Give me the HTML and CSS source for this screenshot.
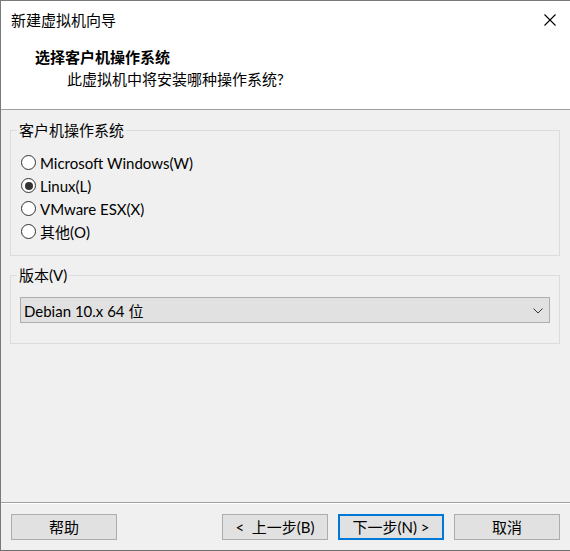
FILE: index.html
```html
<!DOCTYPE html>
<html lang="zh-CN">
<head>
<meta charset="utf-8">
<title>新建虚拟机向导</title>
<link rel="stylesheet" href="styles.css">
</head>
<body>
<div class="window">
  <div class="titlebar">
    <span class="title">新建虚拟机向导</span>
    <span class="close" aria-label="关闭">
      <svg width="12" height="12" viewBox="0 0 12 12"><path d="M0.5 0.5 L11.5 11.5 M11.5 0.5 L0.5 11.5" stroke="#000" stroke-width="1.1" fill="none"/></svg>
    </span>
  </div>
  <div class="header">
    <div class="h-title">选择客户机操作系统</div>
    <div class="h-sub">此虚拟机中将安装哪种操作系统?</div>
  </div>
  <div class="content">
    <fieldset class="group group-os">
      <legend>客户机操作系统</legend>
      <label class="radio"><input type="radio" name="os"><span>Microsoft Windows(W)</span></label>
      <label class="radio"><input type="radio" name="os" checked><span>Linux(L)</span></label>
      <label class="radio"><input type="radio" name="os"><span>VMware ESX(X)</span></label>
      <label class="radio"><input type="radio" name="os"><span>其他(O)</span></label>
    </fieldset>
    <fieldset class="group group-ver">
      <legend>版本(V)</legend>
      <div class="combo">
        <span class="combo-text">Debian 10.x 64 位</span>
        <svg class="chev" width="10" height="6" viewBox="0 0 10 6"><path d="M0.5 0.5 L5 5 L9.5 0.5" stroke="#333" stroke-width="1" fill="none"/></svg>
      </div>
    </fieldset>
  </div>
  <div class="footer">
    <button class="btn">帮助</button>
    <div class="spacer"></div>
    <button class="btn">&lt;&nbsp; 上一步(B)</button>
    <button class="btn btn-default">下一步(N) &gt;</button>
    <button class="btn">取消</button>
  </div>
</div>
</body>
</html>
```
FILE: styles.css
```css
html, body {
  margin: 0;
  padding: 0;
  background: #f0f0f0;
}
body {
  font-family: Lato, "Noto Sans CJK SC", sans-serif;
  font-size: 15px;
  color: #000;
}
.window {
  width: 569px;
  height: 549px;
  border-left: 1px solid #7a7a7a;
  border-top: 1px solid #7a7a7a;
  border-bottom: 1px solid #6e6e6e;
  display: flex;
  flex-direction: column;
  background: #f0f0f0;
  overflow: hidden;
}
.titlebar {
  height: 37px;
  background: #fff;
  display: flex;
  align-items: center;
  padding-left: 10px;
  padding-right: 14px;
  justify-content: space-between;
  flex: none;
}
.title {
  line-height: 20px;
}
.close {
  display: flex;
  width: 12px;
  height: 12px;
}
.header {
  background: #fff;
  height: 72px;
  border-bottom: 1px solid #a0a0a0;
  padding-top: 8px;
  box-sizing: border-box;
  flex: none;
}
.h-title {
  font-weight: bold;
  line-height: 22px;
  padding-left: 34px;
}
.h-sub {
  line-height: 22px;
  padding-left: 66px;
}
.content {
  flex: 1;
  padding: 10px 0 0 9px;
}
.group {
  width: 550px;
  box-sizing: border-box;
  margin: 0;
  border: 1px solid #dcdcdc;
  min-width: 0;
}
.group legend {
  padding: 0 2px;
  line-height: 20px;
}
.group-os {
  padding: 11px 10px 12px 10px;
}
.group-os legend {
  margin-left: -4px;
}
.group-ver {
  margin-top: 9px;
  padding: 12px 9px 20px 9px;
}
.group-ver legend {
  margin-left: -3px;
}
.radio {
  display: flex;
  align-items: center;
  height: 23px;
  gap: 4px;
}
.radio input {
  appearance: none;
  -webkit-appearance: none;
  margin: 0;
  width: 15px;
  height: 15px;
  border: 1px solid #333;
  border-radius: 50%;
  background: #fff;
  box-sizing: border-box;
  display: grid;
  place-items: center;
  flex: none;
}
.radio input:checked::before {
  content: "";
  width: 8px;
  height: 8px;
  border-radius: 50%;
  background: #333;
}
.combo {
  height: 26px;
  box-sizing: border-box;
  border: 1px solid #adadad;
  background: #e1e1e1;
  display: flex;
  align-items: center;
  justify-content: space-between;
  padding: 0 6px 0 3px;
}
.chev {
  display: block;
  margin-top: 1px;
}
.footer {
  flex: none;
  border-top: 1px solid #a0a0a0;
  box-shadow: inset 0 1px 0 #fff;
  padding: 11px 10px 10px 10px;
  display: flex;
  gap: 10px;
}
.spacer {
  flex: 1;
}
.btn {
  width: 106px;
  height: 26px;
  box-sizing: border-box;
  border: 1px solid #adadad;
  background: #e1e1e1;
  font: inherit;
  color: #000;
  padding: 0;
  margin: 0;
  line-height: 20px;
}
.btn-default {
  border: 2px solid #0078d7;
}
```
